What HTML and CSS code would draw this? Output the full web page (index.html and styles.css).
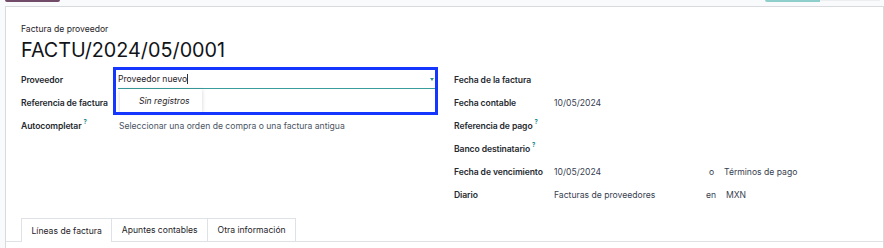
FILE: index.html
```html
<!DOCTYPE html>
<html lang="es">
<head>
<meta charset="utf-8">
<title>Factura de proveedor</title>
<link rel="stylesheet" href="styles.css">
</head>
<body>
<div class="topbar">
  <span class="btn btn-primary"></span>
  <span class="spacer"></span>
  <span class="btn btn-teal"></span>
  <span class="btn btn-light"></span>
</div>
<div class="card">
  <div class="subtitle">Factura de proveedor</div>
  <h1 class="title">FACTU/2024/05/0001</h1>
  <div class="groups">
    <div class="group group-left">
      <div class="row">
        <div class="label">Proveedor</div>
        <div class="value">
          <div class="input">
            <span class="input-text">Proveedor nuevo</span><span class="cursor"></span>
            <span class="caret"></span>
          </div>
        </div>
      </div>
      <div class="row">
        <div class="label">Referencia de factura</div>
        <div class="value"></div>
      </div>
      <div class="row">
        <div class="label">Autocompletar<sup class="help">?</sup></div>
        <div class="value muted">Seleccionar una orden de compra o una factura antigua</div>
      </div>
      <div class="dropdown">Sin registros</div>
      <div class="highlight"></div>
    </div>
    <div class="group group-right">
      <div class="row">
        <div class="label">Fecha de la factura</div>
        <div class="value"></div>
      </div>
      <div class="row">
        <div class="label">Fecha contable</div>
        <div class="value">10/05/2024</div>
      </div>
      <div class="row">
        <div class="label">Referencia de pago<sup class="help">?</sup></div>
        <div class="value"></div>
      </div>
      <div class="row">
        <div class="label">Banco destinatario<sup class="help">?</sup></div>
        <div class="value"></div>
      </div>
      <div class="row">
        <div class="label">Fecha de vencimiento</div>
        <div class="value split"><span class="v1">10/05/2024</span><span class="sep">o</span><span>Términos de pago</span></div>
      </div>
      <div class="row">
        <div class="label">Diario</div>
        <div class="value split"><span class="v1 v1-wide">Facturas de proveedores</span><span class="sep sep-en">en</span><span>MXN</span></div>
      </div>
    </div>
  </div>
  <div class="tabs">
    <div class="tab active">Líneas de factura</div>
    <div class="tab">Apuntes contables</div>
    <div class="tab">Otra información</div>
  </div>
</div>
</body>
</html>
```

FILE: styles.css
```css
* { box-sizing: border-box; }
html, body { margin: 0; padding: 0; }
body {
  background: #f9fafb;
  font-family: Inter, "Noto Sans", sans-serif;
  color: #1f2329;
  width: 884px;
  height: 248px;
  overflow: hidden;
}
.topbar {
  display: flex;
  height: 6px;
  align-items: flex-start;
  padding-left: 5px;
}
.btn { display: block; height: 2px; }
.btn-primary { width: 55px; background: #714b67; border-radius: 0 0 3px 3px; }
.spacer { flex: 1; }
.btn-teal { width: 55px; background: #8fcfcb; border-radius: 0 0 0 2px; }
.btn-light { width: 60px; background: #eceef0; margin-right: 4px; height: 1px; }

.card {
  margin-left: 5px;
  width: 879px;
  height: 242px;
  overflow: hidden;
  background: #fff;
  border: 1px solid #d8dadd;
  border-bottom: none;
  padding: 15px 0 0 0;
}
.subtitle {
  font-size: 8.6px;
  line-height: 14px;
  padding-left: 15px;
  color: #1f2329;
}
.title {
  margin: 1px 0 0 0;
  padding-left: 15px;
  font-size: 19.8px;
  line-height: 26px;
  font-weight: 400;
  color: #111418;
}
.groups {
  display: grid;
  grid-template-columns: 433px 1fr;
  padding-left: 15px;
  margin-top: 5px;
}
.group { position: relative; }
.row {
  display: flex;
  align-items: center;
  height: 23px;
}
.label {
  font-size: 8.6px;
  font-weight: 600;
  color: #262a30;
  white-space: nowrap;
  letter-spacing: -0.1px;
}
.group-left .label { width: 98px; }
.group-right .label { width: 100px; }
.value {
  font-size: 8.6px;
  color: #374151;
  flex: 1;
  white-space: nowrap;
}
.group-left .value { flex: none; width: 316px; }
.muted { color: #4b5563; }
.help {
  color: #017e84;
  font-size: 6px;
  font-weight: 600;
  margin-left: 2px;
  vertical-align: 5px;
  line-height: 0;
}
.input {
  position: relative;
  height: 18px;
  border-bottom: 1px solid #3a9c9c;
  margin-left: -1px;
  display: flex;
  align-items: center;
  color: #1f2329;
}
.cursor {
  display: inline-block;
  width: 1px;
  height: 10px;
  background: #333;
}
.caret {
  position: absolute;
  right: 1px;
  top: 7px;
  width: 0; height: 0;
  border-left: 2.5px solid transparent;
  border-right: 2.5px solid transparent;
  border-top: 3px solid #3a8f8f;
}
.split { display: flex; align-items: center; }
.v1 { width: 155px; }
.v1-wide { width: 152px; }
.sep { width: 15px; }
.sep-en { width: 20px; }

.dropdown {
  position: absolute;
  left: 99px;
  top: 21px;
  width: 82px;
  height: 23px;
  background: #fff;
  box-shadow: 0 1px 4px rgba(0,0,0,0.18);
  font-size: 8.6px;
  font-style: italic;
  color: #1f2329;
  display: flex;
  align-items: center;
  padding-left: 19px;
}
.highlight {
  position: absolute;
  left: 92px;
  top: -1px;
  width: 325px;
  height: 48px;
  border: 3px solid #1536ff;
  pointer-events: none;
}
.tabs {
  display: flex;
  margin-top: 12px;
  padding-left: 15px;
  border-bottom: 1px solid #dee2e6;
}
.tab {
  font-size: 8.6px;
  color: #1f2329;
  height: 23px;
  display: flex;
  align-items: center;
  padding: 0 9.5px;
  border: 1px solid #dee2e6;
  border-bottom: none;
  border-left: none;
  margin-bottom: -1px;
  background: #fff;
}
.tab.active {
  border-left: 1px solid #dee2e6;
  height: 24px;
}
```
